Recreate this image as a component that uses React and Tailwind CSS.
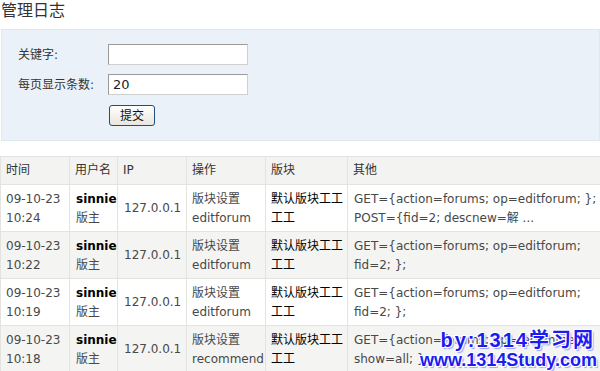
import React from "react";

const rows = [
  { t1: "09-10-23", t2: "10:24", op2: "editforum", o1: "GET={action=forums; op=editforum; };", o2: "POST={fid=2; descnew=解 ...", bg: "bg-white" },
  { t1: "09-10-23", t2: "10:22", op2: "editforum", o1: "GET={action=forums; op=editforum;", o2: "fid=2; };", bg: "bg-[#f4f4f2]" },
  { t1: "09-10-23", t2: "10:19", op2: "editforum", o1: "GET={action=forums; op=editforum;", o2: "fid=2; };", bg: "bg-white" },
  { t1: "09-10-23", t2: "10:18", op2: "recommend", o1: "GET={action=forums; op=recommend;", o2: "show=all; };", bg: "bg-[#f4f4f2]" },
];

const font = { fontFamily: '"DejaVu Sans", "Noto Sans CJK SC", sans-serif' };

export default function App() {
  return (
    <div className="relative w-[600px] h-[371px] overflow-hidden bg-white text-[12px] text-[#484848]" style={font}>
      <div className="h-[29px] pl-[1px] text-[16px] leading-[20px] text-[#333] pt-[1px]">管理日志</div>
      <div className="h-[112px] ml-[1px] border border-[#dfe7ef] bg-[#eaf1f8] pt-[14px]">
        <div className="flex items-center h-[21px]">
          <div className="w-[106px] pl-[16px] text-[#333]">关键字:</div>
          <div className="w-[140px] h-[21px] bg-white border border-t-[#9a9a9a] border-l-[#9a9a9a] border-b-[#cfcfcf] border-r-[#cfcfcf]"></div>
        </div>
        <div className="flex items-center h-[21px] mt-[9px]">
          <div className="w-[106px] pl-[16px] text-[#333]">每页显示条数:</div>
          <div className="w-[140px] h-[21px] bg-white border border-t-[#9a9a9a] border-l-[#9a9a9a] border-b-[#cfcfcf] border-r-[#cfcfcf] pl-[4px] text-[13px] leading-[19px] text-[#222]">20</div>
        </div>
        <div className="flex mt-[10px] pl-[107px]">
          <div className="w-[46px] h-[21px] rounded-[3px] border border-[#1d4f80] bg-gradient-to-b from-white to-[#e8e6dc] flex items-center justify-center text-[#111] text-[12px]">提交</div>
        </div>
      </div>
      <table className="mt-[15px] w-[600px] table-fixed border-collapse">
        <colgroup>
          <col className="w-[69px]" />
          <col className="w-[48px]" />
          <col className="w-[69px]" />
          <col className="w-[79px]" />
          <col className="w-[82px]" />
          <col className="w-[253px]" />
        </colgroup>
        <thead>
          <tr className="bg-[#f3f3f1] text-[#333]">
            {["时间", "用户名", "IP", "操作", "版块", "其他"].map((h) => (
              <th key={h} className="border border-[#e3e3df] text-left font-normal pl-[5px] h-[28px] leading-[19px] whitespace-nowrap">{h}</th>
            ))}
          </tr>
        </thead>
        <tbody>
          {rows.map((r, i) => (
            <tr key={i} className={r.bg}>
              <td className="border border-[#e3e3df] pl-[5px] pt-[5px] pb-[3px] leading-[19px] align-top whitespace-nowrap">{r.t1}<br />{r.t2}</td>
              <td className="border border-[#e3e3df] pl-[6px] pt-[5px] pb-[3px] leading-[19px] align-top whitespace-nowrap"><b className="text-black">sinnie</b><br />版主</td>
              <td className="border border-[#e3e3df] pl-[6px] leading-[19px] align-middle whitespace-nowrap">127.0.0.1</td>
              <td className="border border-[#e3e3df] pl-[5px] pt-[5px] pb-[3px] leading-[19px] align-top whitespace-nowrap overflow-hidden">版块设置<br />{r.op2}</td>
              <td className="border border-[#e3e3df] pl-[5px] pt-[5px] pb-[3px] leading-[19px] align-top whitespace-nowrap text-black">默认版块工工<br />工工</td>
              <td className="border border-[#e3e3df] pl-[6px] pt-[5px] pb-[3px] leading-[19px] align-top whitespace-nowrap overflow-hidden">{r.o1}<br />{r.o2}</td>
            </tr>
          ))}
        </tbody>
      </table>
      <div
        className="absolute right-[3px] bottom-[0px] text-right font-bold text-[#1c1cf0]"
        style={{ fontFamily: '"Liberation Sans", "Noto Sans CJK SC", sans-serif', textShadow: "1px 1px 0 #fff, -1px -1px 0 #fff, 1px -1px 0 #fff, -1px 1px 0 #fff, 2px 2px 1px #9aa0ff" }}
      >
        <div className="text-[20px] leading-[20px] tracking-[2px] pr-[2px]">by:1314学习网</div>
        <div className="text-[18px] leading-[20px] pb-[1px]">www.1314Study.com</div>
      </div>
    </div>
  );
}
